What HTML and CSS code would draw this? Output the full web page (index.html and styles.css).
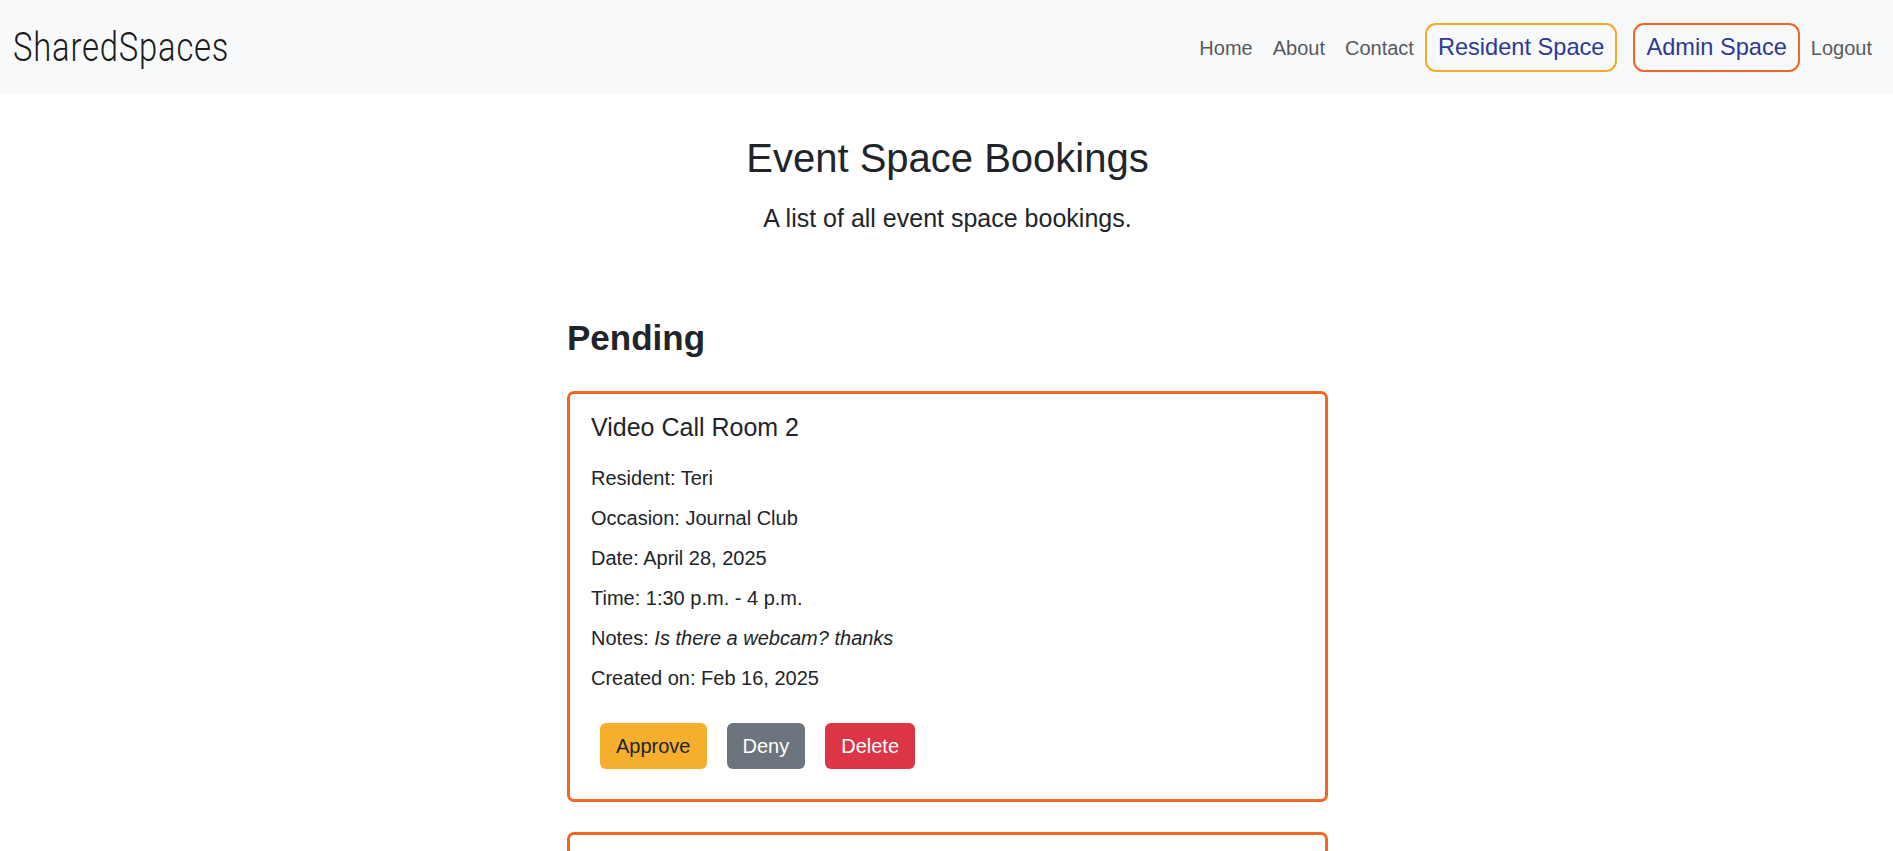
FILE: index.html
```html
<!DOCTYPE html>
<html lang="en">
<head>
<meta charset="utf-8">
<title>SharedSpaces - Event Space Bookings</title>
<link rel="stylesheet" href="styles.css">
</head>
<body>
<nav class="navbar">
  <a class="brand" href="#">SharedSpaces</a>
  <ul class="nav">
    <li><a class="nav-link" href="#">Home</a></li>
    <li><a class="nav-link" href="#">About</a></li>
    <li><a class="nav-link" href="#">Contact</a></li>
    <li><a class="nav-box nav-box-resident" href="#">Resident Space</a></li>
    <li><a class="nav-box nav-box-admin" href="#">Admin Space</a></li>
    <li><a class="nav-link nav-logout" href="#">Logout</a></li>
  </ul>
</nav>

<main class="page">
  <header class="intro">
    <h1 class="page-title">Event Space Bookings</h1>
    <p class="lead">A list of all event space bookings.</p>
  </header>

  <section class="bookings">
    <h2 class="section-title">Pending</h2>

    <article class="card">
      <h3 class="card-title">Video Call Room 2</h3>
      <p class="card-text">Resident: Teri</p>
      <p class="card-text">Occasion: Journal Club</p>
      <p class="card-text">Date: April 28, 2025</p>
      <p class="card-text">Time: 1:30 p.m. - 4 p.m.</p>
      <p class="card-text">Notes: <em>Is there a webcam? thanks</em></p>
      <p class="card-text">Created on: Feb 16, 2025</p>
      <div class="actions">
        <button class="btn btn-approve">Approve</button>
        <button class="btn btn-deny">Deny</button>
        <button class="btn btn-delete">Delete</button>
      </div>
    </article>

    <article class="card">
      <h3 class="card-title">Function Room</h3>
      <p class="card-text">Resident: Marcus</p>
      <p class="card-text">Occasion: Birthday Party</p>
      <p class="card-text">Date: May 3, 2025</p>
      <p class="card-text">Time: 6 p.m. - 10 p.m.</p>
      <p class="card-text">Notes: <em>None</em></p>
      <p class="card-text">Created on: Feb 18, 2025</p>
      <div class="actions">
        <button class="btn btn-approve">Approve</button>
        <button class="btn btn-deny">Deny</button>
        <button class="btn btn-delete">Delete</button>
      </div>
    </article>
  </section>
</main>
</body>
</html>
```

FILE: styles.css
```css
* { box-sizing: border-box; }

html, body {
  margin: 0;
  padding: 0;
}

body {
  font-family: "Liberation Sans", Arial, sans-serif;
  font-size: 20px;
  line-height: 1.5;
  color: #212529;
  background: #ffffff;
}

a { text-decoration: none; }

/* ---------- Navbar ---------- */
.navbar {
  height: 94px;
  background: #f8f9fa;
  display: flex;
  align-items: center;
  justify-content: space-between;
  padding: 0 11px 0 13px;
}

.brand {
  font-family: Roboto, "DejaVu Sans", sans-serif;
  font-weight: 300;
  font-size: 41px;
  line-height: 1;
  color: #1c1c1c;
  display: inline-block;
  transform: scaleX(0.8);
  transform-origin: left center;
  letter-spacing: 1px;
}

.nav {
  list-style: none;
  margin: 0;
  padding: 0;
  display: flex;
  align-items: baseline;
}

.nav-link {
  display: block;
  padding: 0 10px;
  font-size: 20px;
  line-height: 30px;
  color: #58595a;
}

.nav-box {
  display: block;
  font-size: 23.6px;
  line-height: 34px;
  padding: 5.5px 11px;
  border: 2px solid;
  border-radius: 11px;
  color: #2d3a92;
  margin-left: 1px;
}

.nav-box-resident { border-color: #f6a92c; }
.nav-box-admin { border-color: #f26522; margin-left: 16px; }
.nav-logout { margin-left: 1px; }

/* ---------- Page ---------- */
.page {
  padding-left: 2px;
}

.intro {
  text-align: center;
  padding-top: 40px;
}

.page-title {
  margin: 0 0 18px;
  font-size: 40px;
  font-weight: 400;
  line-height: 48px;
}

.lead {
  margin: 0;
  font-size: 25px;
  line-height: 37.5px;
}

/* ---------- Bookings ---------- */
.bookings {
  width: 761px;
  margin: 79px auto 0;
}

.section-title {
  margin: 0 0 32px;
  font-size: 35px;
  font-weight: 700;
  line-height: 42px;
}

.card {
  border: 3px solid #f26522;
  border-radius: 7px;
  padding: 18px 21px 20px;
  margin-bottom: 30px;
}

.card-title {
  margin: 0 0 21px;
  font-size: 25px;
  font-weight: 400;
  line-height: 30px;
}

.card-text {
  margin: 0 0 10px;
  line-height: 30px;
}

.actions {
  display: flex;
  margin-top: 20px;
}

.btn {
  font-family: inherit;
  font-size: 20px;
  line-height: 30px;
  padding: 7px 15px;
  margin: 10px;
  border: 1px solid transparent;
  border-radius: 6px;
  cursor: pointer;
}

.actions .btn:first-child { margin-left: 9px; }

.btn-approve { background: #f6ae2d; color: #212529; }
.btn-deny { background: #6c757d; color: #ffffff; }
.btn-delete { background: #dc3545; color: #ffffff; }
```
